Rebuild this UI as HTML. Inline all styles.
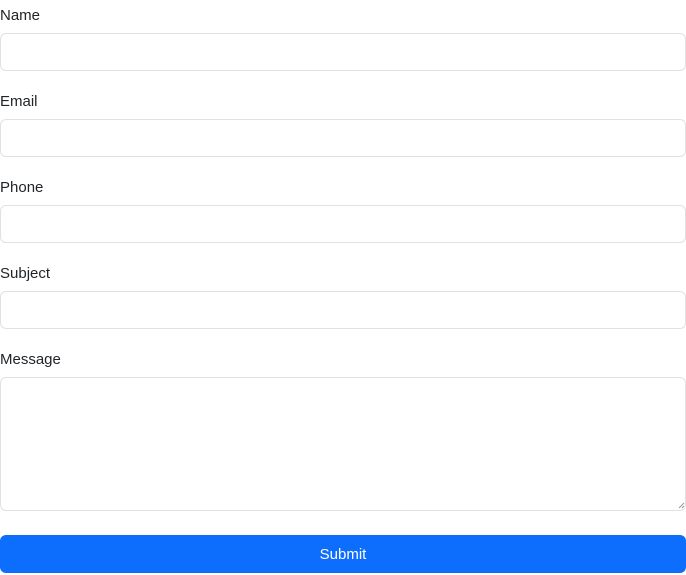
<!DOCTYPE html>
<html><head><style>
body{margin:0;background:#fff;font-family:"Liberation Sans",sans-serif;color:#212529;width:686px;height:573px;overflow:hidden;position:relative}
.l{position:absolute;left:0;font-size:15px;line-height:24px}
.i{position:absolute;left:0;width:684px;height:36px;border:1px solid #dee2e6;border-radius:6px;background:#fff}
.b{position:absolute;left:0;top:535px;width:686px;height:38px;background:#0d6efd;border-radius:6px;color:#fff;font-size:15px;line-height:40px;text-align:center}
</style></head><body>
<div class="l" style="top:4px">Name</div><div class="i" style="top:33px"></div>
<div class="l" style="top:90px">Email</div><div class="i" style="top:119px"></div>
<div class="l" style="top:176px">Phone</div><div class="i" style="top:205px"></div>
<div class="l" style="top:262px">Subject</div><div class="i" style="top:291px"></div>
<div class="l" style="top:348px">Message</div><div class="i" style="top:377px;height:132px"></div>
<svg style="position:absolute;left:678px;top:502px" width="7" height="7"><path d="M6 1L1 6M6 4L4 6" stroke="#999" stroke-width="1"/></svg>
<div class="b">Submit</div>
</body></html>
